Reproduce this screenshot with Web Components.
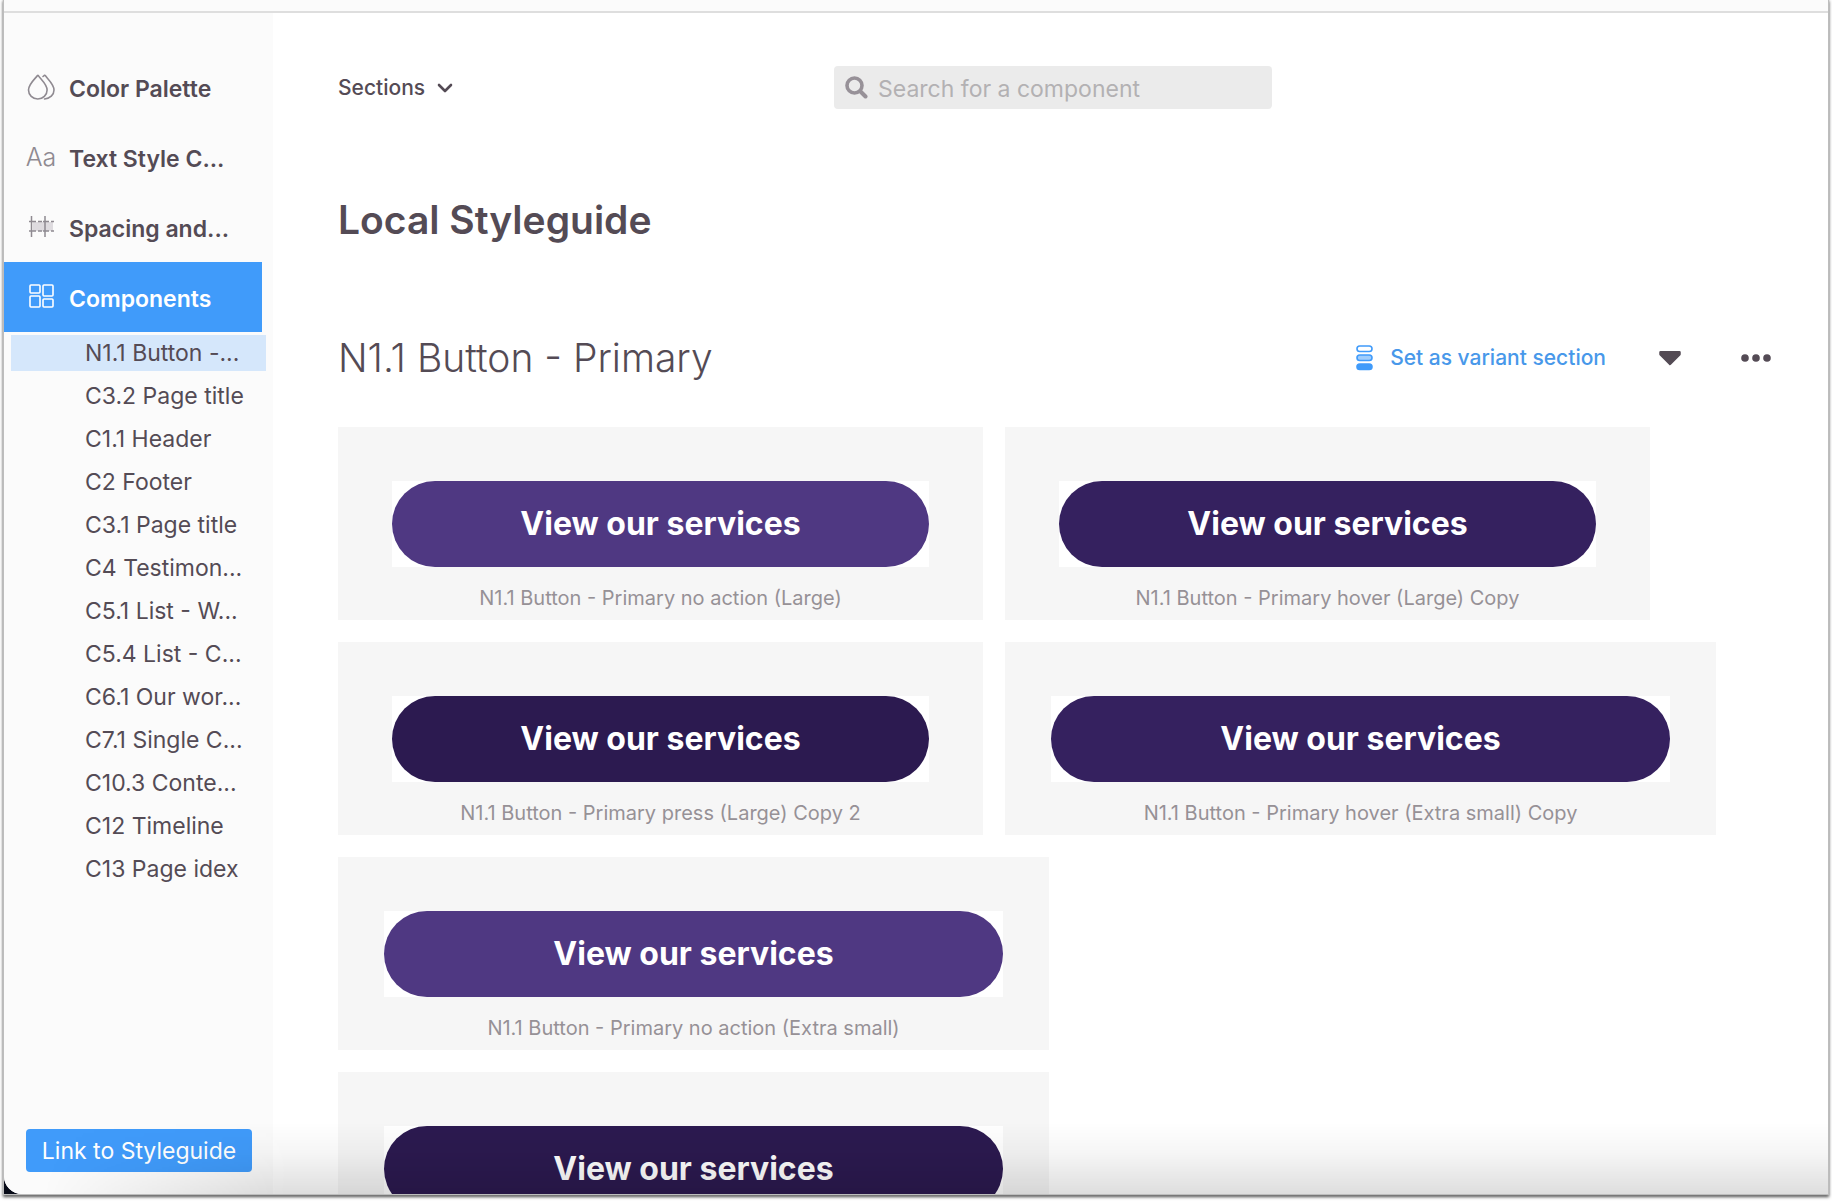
<!DOCTYPE html>
<html lang="en">
<head>
<meta charset="utf-8">
<title>Local Styleguide</title>
<style>
  html, body { height: 100%; margin: 0; }
  body {
    --ink: #544b55;
    --muted: #969196;
    --blue: #409bfa;
    background: #fff;
    color: var(--ink);
    font-family: Inter, "Liberation Sans", sans-serif;
    overflow: hidden;
  }
</style>
</head>
<body>
<app-window>
  <side-bar slot="side">
    <nav-item label="Color Palette">
      <svg width="30" height="30" viewBox="0 0 30 30" fill="none" stroke="#8f8a91" stroke-width="1.6" stroke-linecap="round" stroke-linejoin="round"><path d="M11.500 3.500C9.500 6.500 2.500 12 2.500 18a9.300 9 0 0 0 18.600 0C21.100 12 13.800 6.500 12.300 3.500Q11.900 3 11.500 3.500Z"/><path d="M17 4.500L18.400 3.300Q19 3 19.400 3.700C21 6.500 28 12 28 18c0 5-4 8.500-9.500 9"/></svg>
    </nav-item>
    <nav-item label="Text Style C..."><span class="aa">Aa</span></nav-item>
    <nav-item label="Spacing and...">
      <svg width="30" height="30" viewBox="0 0 30 30" fill="none" stroke="#8f8a91" stroke-width="1.500"><path d="M7 10h20v9H7z" fill="#dedbdf" stroke="none"/><path d="M5.500 4v21M19 4v21"/><path d="M3 9.500h7M12 9.500h4M17 9.500h6M25 9.500h3M3 19h7M12 19h4M17 19h6M25 19h3"/></svg>
    </nav-item>
    <nav-item label="Components" active>
      <svg width="30" height="30" viewBox="0 0 30 30" fill="none" stroke="#fff" stroke-width="1.600" stroke-linejoin="round"><rect x="4" y="3" width="10" height="8" rx="1"/><rect x="17" y="3" width="10" height="11" rx="1"/><rect x="4" y="14" width="10" height="11" rx="1"/><rect x="17" y="17" width="10" height="8" rx="1"/></svg>
    </nav-item>
    <sub-item active>N1.1 Button -...</sub-item>
    <sub-item>C3.2 Page title</sub-item>
    <sub-item>C1.1 Header</sub-item>
    <sub-item>C2 Footer</sub-item>
    <sub-item>C3.1 Page title</sub-item>
    <sub-item>C4 Testimon...</sub-item>
    <sub-item>C5.1 List - W...</sub-item>
    <sub-item>C5.4 List - C...</sub-item>
    <sub-item>C6.1 Our wor...</sub-item>
    <sub-item>C7.1 Single C...</sub-item>
    <sub-item>C10.3 Conte...</sub-item>
    <sub-item>C12 Timeline</sub-item>
    <sub-item>C13 Page idex</sub-item>
  </side-bar>
  <tool-bar></tool-bar>
  <style-section heading="N1.1 Button - Primary">
    <component-card caption="N1.1 Button - Primary no action (Large)">View our services</component-card>
    <component-card caption="N1.1 Button - Primary hover (Large) Copy" state="hover">View our services</component-card>
    <component-card caption="N1.1 Button - Primary press (Large) Copy 2" state="press">View our services</component-card>
    <component-card caption="N1.1 Button - Primary hover (Extra small) Copy" state="hover" wide>View our services</component-card>
    <component-card caption="N1.1 Button - Primary no action (Extra small)" wide>View our services</component-card>
    <component-card state="press" wide>View our services</component-card>
  </style-section>
</app-window>

<script>
const define = (name, render) => customElements.define(name, class extends HTMLElement {
  connectedCallback() {
    if (this.shadowRoot) return;
    this.attachShadow({ mode: "open" }).innerHTML = render(this);
  }
});

define("app-window", () => `
  <style>
    :host { display: flex; flex-direction: column; box-sizing: border-box; height: 100vh; padding: 0 4px 8px; }
    .frame { flex: 1; min-height: 0; display: flex; flex-direction: column; background: #080b18;
      box-shadow: 0 0 1px 1px #bdbdbd, 0 2px 3px 1px rgba(0,0,0,.7); }
    .page { flex: 1; min-height: 0; display: flex; flex-direction: column; position: relative;
      background: #fff; border-bottom-left-radius: 18px; overflow: hidden; }
    .strip { flex: none; height: 11px; background: #fbfbfb; border-bottom: 2px solid #dedede; }
    .cols { flex: 1; min-height: 0; display: flex; }
    main { flex: 1; min-width: 0; padding: 53px 56px 0 65px; overflow: hidden; }
    .fade { position: absolute; left: 0; right: 0; bottom: 0; height: 72px; pointer-events: none;
      background: linear-gradient(rgba(0,0,0,0), rgba(0,0,0,.04) 45%, rgba(0,0,0,.13));
      -webkit-mask-image: linear-gradient(100deg, transparent 50px, #000 290px);
      mask-image: linear-gradient(100deg, transparent 50px, #000 290px); }
  </style>
  <div class="frame"><div class="page">
    <div class="strip"></div>
    <div class="cols"><slot name="side"></slot><main><slot></slot></main></div>
    <div class="fade"></div>
  </div></div>`);

define("side-bar", () => `
  <style>
    :host { display: flex; flex-direction: column; flex: none; width: 269px; background: #fbfbfb; }
    nav { flex: 1; padding-top: 39px; }
    .link { display: block; margin: 0 22px 22px; width: 226px; height: 43px; padding: 1px 0 0; border: 0; border-radius: 4px;
      background: var(--blue); color: #fff; font: 400 23px/42px Inter, sans-serif; }
  </style>
  <nav><slot></slot></nav>
  <button class="link">Link to Styleguide</button>`);

define("nav-item", el => `
  <style>
    :host { display: block; width: 258px; }
    a { display: flex; align-items: center; gap: 13px; height: 70px; padding: 0 0 0 22px; box-sizing: border-box;
      color: var(--ink); font-size: 23px; line-height: 28px; font-weight: 600; text-decoration: none; white-space: nowrap; }
    :host([active]) a { background: var(--blue); color: #fff; }
    .icon { display: flex; justify-content: center; width: 30px; }
    .text { padding-top: 3px; }
    ::slotted(svg) { display: block; }
    ::slotted(.aa) { color: #8f8a91; font-weight: 300; font-size: 25px; }
  </style>
  <a href="#"><span class="icon"><slot></slot></span><span class="text">${el.getAttribute("label")}</span></a>`);

define("sub-item", () => `
  <style>
    :host { display: block; padding: 3px 3px 4px 7px; width: 255px; }
    a { display: block; padding-left: 74px; color: var(--ink); font-size: 23px; line-height: 36px;
      text-decoration: none; white-space: nowrap; }
    :host([active]) a { background: #d5e7fb; }
  </style>
  <a href="#"><slot></slot></a>`);

define("tool-bar", () => `
  <style>
    :host { display: grid; grid-template-columns: 1fr 438px 1fr; align-items: center; padding-right: 4px; }
    .sections { justify-self: start; display: flex; align-items: center; gap: 12px; padding: 0; border: 0; background: none;
      color: var(--ink); font: 500 21px/28px Inter, sans-serif; }
    .search { display: flex; align-items: center; gap: 10px; height: 43px; padding: 0 11px; box-sizing: border-box;
      border-radius: 4px; background: #ebebeb; }
    .search svg { flex: none; }
    input { flex: 1; min-width: 0; border: 0; padding: 2px 0 0; outline: 0; background: none; color: var(--ink);
      font: 400 23px/28px Inter, sans-serif; }
    input::placeholder { color: #b3b1b3; opacity: 1; }
  </style>
  <button class="sections">Sections
    <svg width="16" height="12" viewBox="0 0 16 12" fill="none" stroke="#544b55" stroke-width="2.600" stroke-linecap="round" stroke-linejoin="round"><path d="M2 3l6 6 6-6"/></svg>
  </button>
  <label class="search">
    <svg width="23" height="23" viewBox="0 0 23 23" fill="none" stroke="#979198" stroke-linecap="round"><circle cx="9.500" cy="9.500" r="7.500" stroke-width="3.600"/><path d="M15.500 15.500l5 5" stroke-width="4"/></svg>
    <input type="search" placeholder="Search for a component" aria-label="Search for a component">
  </label>`);

define("style-section", el => `
  <style>
    :host { display: block; }
    h1, h2 { margin: 0; font-size: 39px; line-height: 50px; white-space: nowrap; }
    h1 { margin-top: 86px; font-weight: 600; }
    header { display: flex; align-items: center; margin-top: 88px; }
    h2 { flex: 1; font-weight: 300; }
    button { display: flex; align-items: center; padding: 0; border: 0; background: none; }
    .variant { gap: 16px; color: #4898ea; font: 500 21px/28px Inter, sans-serif; }
    .open { margin-left: 52px; }
    .more { margin-left: 58px; }
    .cards { display: flex; flex-wrap: wrap; gap: 22px; margin-top: 44px; }
  </style>
  <h1>Local Styleguide</h1>
  <header>
    <h2>${el.getAttribute("heading")}</h2>
    <button class="variant">
      <svg width="18" height="26" viewBox="0 0 18 26" stroke="#409bfa" stroke-width="1.600"><rect x="1" y="1" width="15" height="5.500" rx="2.750" fill="#fff"/><rect x="1" y="10" width="15" height="5.500" rx="2.750" fill="#a0cdfc"/><rect x="1" y="19" width="15" height="5.500" rx="2.750" fill="#409bfa"/></svg>
      Set as variant section
    </button>
    <button class="open" aria-label="Collapse section"><svg width="24" height="16" viewBox="0 0 24 16" fill="#544b55" stroke="#544b55" stroke-width="2.500" stroke-linejoin="round"><path d="M2.500 2.300h19v2L12 14 2.500 4.300z"/></svg></button>
    <button class="more" aria-label="More"><svg width="32" height="10" viewBox="0 0 32 10" fill="#544b55"><circle cx="5" cy="5" r="3.800"/><circle cx="16" cy="5" r="3.800"/><circle cx="27" cy="5" r="3.800"/></svg></button>
  </header>
  <div class="cards"><slot></slot></div>`);

define("component-card", el => `
  <style>
    :host { display: flex; flex-direction: column; box-sizing: border-box; width: 645px; height: 193px;
      padding: 54px 54px 0; background: #f6f6f6; --fill: #4f3882; }
    :host([wide]) { width: 711px; padding: 54px 46px 0; }
    :host([state="hover"]) { --fill: #35215f; }
    :host([state="press"]) { --fill: #2c1a50; }
    .art { background: #fff; }
    button { display: block; width: 100%; height: 86px; padding: 0; border: 0; border-radius: 43px;
      background: var(--fill); color: #fff; font: 700 32px/86px Inter, sans-serif; }
    p { margin: 17px 0 0; color: var(--muted); font-size: 20px; line-height: 28px; text-align: center; white-space: nowrap; }
  </style>
  <div class="art"><button><slot></slot></button></div>
  ${el.hasAttribute("caption") ? `<p>${el.getAttribute("caption")}</p>` : ""}`);
</script>
</body>
</html>
